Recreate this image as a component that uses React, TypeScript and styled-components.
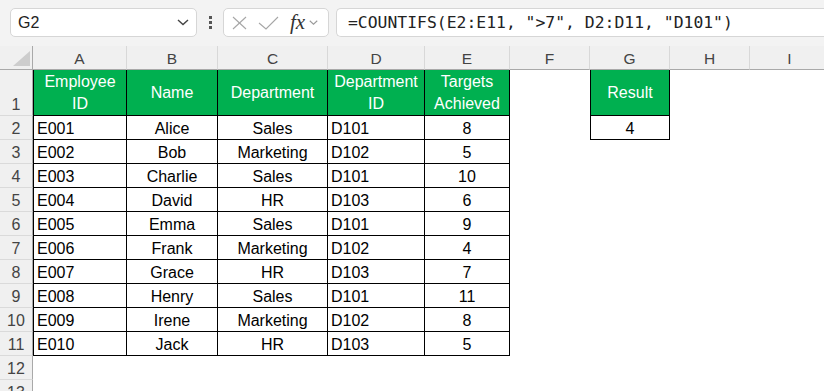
import React from 'react';
import styled, { createGlobalStyle } from 'styled-components';

const GlobalStyle = createGlobalStyle`
  html, body {
    margin: 0;
    padding: 0;
    background: #fff;
  }
  body {
    font-family: 'Liberation Sans', Arial, sans-serif;
    overflow: hidden;
  }
  * {
    box-sizing: border-box;
  }
`;

const Page = styled.div`
  width: 824px;
  height: 391px;
  overflow: hidden;
  background: #fff;
`;

const Toolbar = styled.div`
  display: flex;
  align-items: flex-start;
  height: 46px;
  padding: 8px 0 0 10px;
  background: #f3f3f3;
`;

const NameBox = styled.div`
  display: flex;
  align-items: center;
  justify-content: space-between;
  width: 187px;
  height: 29px;
  padding: 0 7px;
  background: #fff;
  border: 1px solid #d6d6d6;
  border-radius: 5px;
  font-size: 16px;
  color: #222;
`;

const Dots = styled.div`
  display: flex;
  flex-direction: column;
  align-items: center;
  justify-content: center;
  gap: 2px;
  width: 26px;
  height: 29px;
`;

const Dot = styled.span`
  width: 3px;
  height: 3px;
  background: #555;
`;

const FxBox = styled.div`
  display: flex;
  align-items: center;
  width: 106px;
  height: 29px;
  padding-left: 8px;
  background: #fff;
  border: 1px solid #d6d6d6;
  border-radius: 5px;
`;

const FxLabel = styled.span`
  font-family: 'Liberation Serif', 'Times New Roman', serif;
  font-style: italic;
  font-size: 21px;
  color: #333;
  margin: 0 4px 0 11px;
  line-height: 1;
`;

const FormulaInput = styled.div`
  flex: 1;
  display: flex;
  align-items: center;
  height: 29px;
  margin-left: 7px;
  padding-left: 11px;
  background: #fff;
  border: 1px solid #d6d6d6;
  border-right: none;
  border-radius: 5px 0 0 5px;
  font-family: 'DejaVu Sans Mono', 'Liberation Mono', monospace;
  font-size: 16.4px;
  color: #222;
  white-space: pre;
`;

const Sheet = styled.div`
  display: grid;
  grid-template-columns: 33px 94px 91px 110px 97px 85px 80px 80px 80px 80px;
  grid-template-rows: 24px 46px repeat(12, 24px);
  font-size: 16px;
`;

const Corner = styled.div`
  display: flex;
  align-items: flex-end;
  justify-content: flex-end;
  padding: 0 2px 3px 0;
  background: #f0f0f0;
  border-right: 1px solid #a9a9a9;
  border-bottom: 1px solid #a9a9a9;
`;

const Triangle = styled.div`
  width: 0;
  height: 0;
  border-left: 17px solid transparent;
  border-bottom: 15px solid #cdcdcd;
`;

const ColHead = styled.div`
  display: flex;
  align-items: center;
  justify-content: center;
  padding-top: 2px;
  background: #f0f0f0;
  border-right: 1px solid #d8d8d8;
  border-bottom: 1px solid #a9a9a9;
  color: #444;
  font-size: 15.5px;
`;

const RowHead = styled.div`
  display: flex;
  align-items: flex-end;
  justify-content: center;
  line-height: 20px;
  background: #f0f0f0;
  border-right: 1px solid #a9a9a9;
  border-bottom: 1px solid #dadada;
  color: #444;
`;

const HeadCell = styled.div<{ $first?: boolean }>`
  display: flex;
  align-items: center;
  justify-content: center;
  padding: 1px 4px 0;
  text-align: center;
  line-height: 22px;
  background: #00b050;
  color: #fff;
  border-right: 1px solid #000;
  border-bottom: 1px solid #000;
  border-left: ${(p) => (p.$first ? '1px solid #000' : 'none')};
`;

const DataCell = styled.div<{ $first?: boolean; $align: 'left' | 'center' }>`
  display: flex;
  align-items: flex-end;
  justify-content: ${(p) => (p.$align === 'left' ? 'flex-start' : 'center')};
  padding: 0 3px;
  line-height: 20px;
  color: #000;
  border-right: 1px solid #000;
  border-bottom: 1px solid #000;
  border-left: ${(p) => (p.$first ? '1px solid #000' : 'none')};
`;

const Blank = styled.div`
  background: #fff;
`;

const ChevronDown = ({ color, size }: { color: string; size: number }) => (
  <svg width={size} height={size * 0.55} viewBox="0 0 12 6.6" fill="none">
    <polyline points="1,1 6,5.6 11,1" stroke={color} strokeWidth="1.4" />
  </svg>
);

const cols = ['A', 'B', 'C', 'D', 'E', 'F', 'G', 'H', 'I'];
const aligns: ('left' | 'center')[] = ['left', 'center', 'center', 'left', 'center'];
const headers = ['Employee ID', 'Name', 'Department', 'Department ID', 'Targets Achieved'];

const data = [
  ['E001', 'Alice', 'Sales', 'D101', '8'],
  ['E002', 'Bob', 'Marketing', 'D102', '5'],
  ['E003', 'Charlie', 'Sales', 'D101', '10'],
  ['E004', 'David', 'HR', 'D103', '6'],
  ['E005', 'Emma', 'Sales', 'D101', '9'],
  ['E006', 'Frank', 'Marketing', 'D102', '4'],
  ['E007', 'Grace', 'HR', 'D103', '7'],
  ['E008', 'Henry', 'Sales', 'D101', '11'],
  ['E009', 'Irene', 'Marketing', 'D102', '8'],
  ['E010', 'Jack', 'HR', 'D103', '5'],
];

const renderCell = (row: number, c: number) => {
  const key = `${row}-${c}`;
  if (row === 1 && c < 5) {
    return (
      <HeadCell key={key} $first={c === 0}>
        {headers[c]}
      </HeadCell>
    );
  }
  if (row >= 2 && row <= 11 && c < 5) {
    return (
      <DataCell key={key} $first={c === 0} $align={aligns[c]}>
        {data[row - 2][c]}
      </DataCell>
    );
  }
  if (c === 6 && row === 1) {
    return (
      <HeadCell key={key} $first>
        Result
      </HeadCell>
    );
  }
  if (c === 6 && row === 2) {
    return (
      <DataCell key={key} $first $align="center">
        4
      </DataCell>
    );
  }
  return <Blank key={key} />;
};

const App: React.FC = () => {
  const rowNums = Array.from({ length: 13 }, (_, i) => i + 1);

  return (
    <Page>
      <GlobalStyle />
      <Toolbar>
        <NameBox>
          <span>G2</span>
          <ChevronDown color="#444" size={12} />
        </NameBox>
        <Dots>
          <Dot />
          <Dot />
          <Dot />
        </Dots>
        <FxBox>
          <svg width="15" height="14" viewBox="0 0 15 14" fill="none">
            <line x1="1" y1="1" x2="14" y2="13" stroke="#a6a6a6" strokeWidth="1.1" />
            <line x1="14" y1="1" x2="1" y2="13" stroke="#a6a6a6" strokeWidth="1.1" />
          </svg>
          <svg width="21" height="14" viewBox="0 0 21 14" fill="none" style={{ marginLeft: 11 }}>
            <polyline points="1,7 8,13 20,1" stroke="#a6a6a6" strokeWidth="1.1" />
          </svg>
          <FxLabel>fx</FxLabel>
          <ChevronDown color="#999" size={9} />
        </FxBox>
        <FormulaInput>=COUNTIFS(E2:E11, "&gt;7", D2:D11, "D101")</FormulaInput>
      </Toolbar>

      <Sheet>
        <Corner>
          <Triangle />
        </Corner>
        {cols.map((c) => (
          <ColHead key={c}>{c}</ColHead>
        ))}
        {rowNums.map((row) => (
          <React.Fragment key={row}>
            <RowHead>{row}</RowHead>
            {cols.map((_, c) => renderCell(row, c))}
          </React.Fragment>
        ))}
      </Sheet>
    </Page>
  );
};

export default App;
